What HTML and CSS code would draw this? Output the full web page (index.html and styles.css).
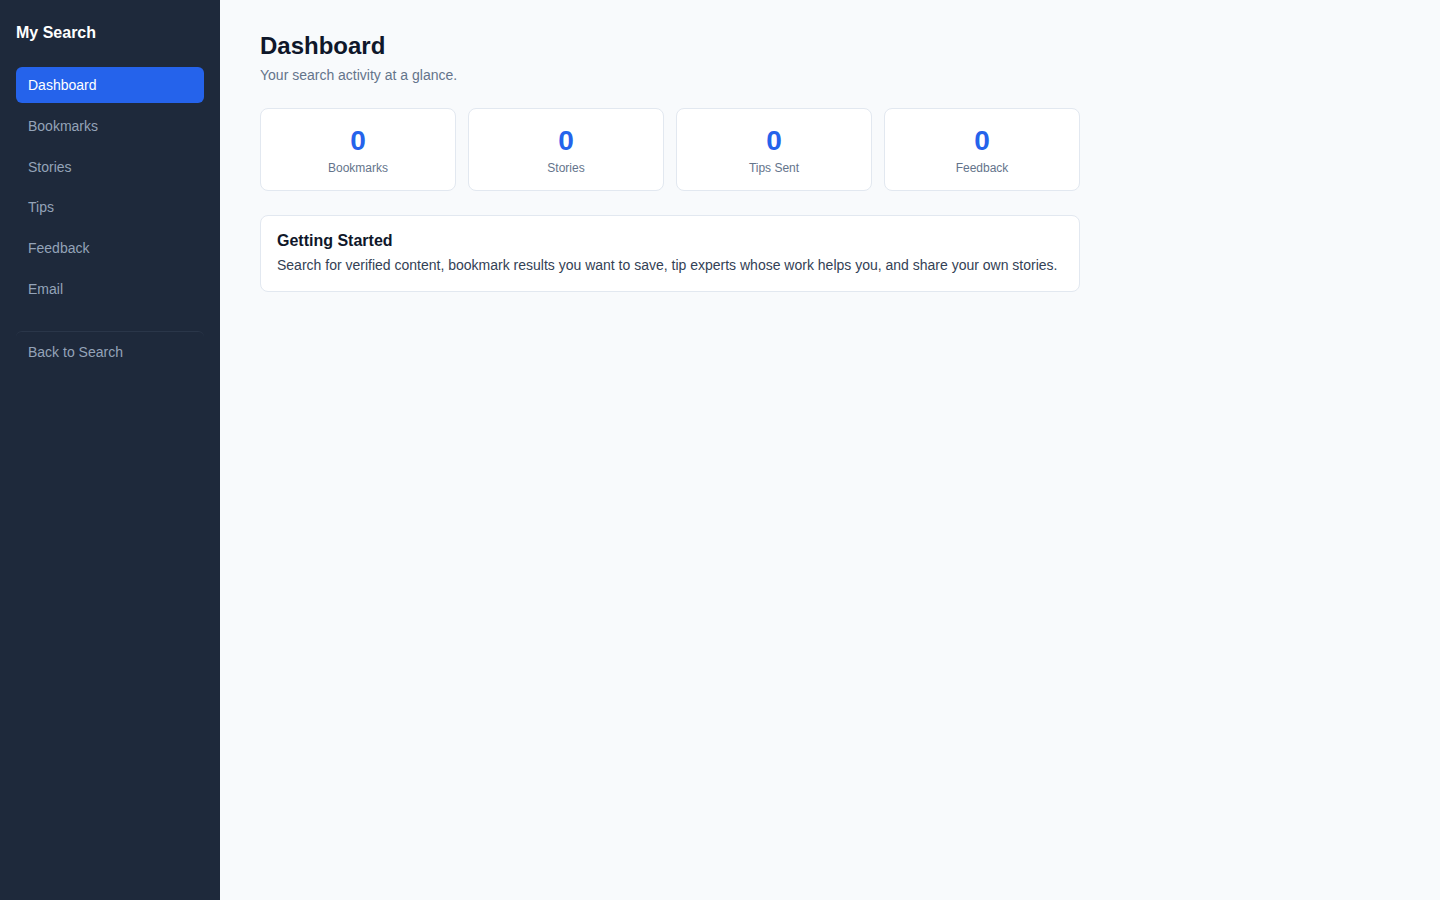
FILE: index.html
```html
<!DOCTYPE html>
<html>
<head>
<meta charset="utf-8">
<link rel="stylesheet" href="styles.css">
</head>
<body>
<div class="app">
  <aside class="sidebar">
    <div class="brand">My Search</div>
    <nav class="nav">
      <a class="nav-item active">Dashboard</a>
      <a class="nav-item">Bookmarks</a>
      <a class="nav-item">Stories</a>
      <a class="nav-item">Tips</a>
      <a class="nav-item">Feedback</a>
      <a class="nav-item">Email</a>
    </nav>
    <div class="nav-footer">
      <a class="nav-item">Back to Search</a>
    </div>
  </aside>
  <main class="main">
    <div class="content">
      <h1 class="title">Dashboard</h1>
      <p class="subtitle">Your search activity at a glance.</p>
      <div class="stats">
        <div class="stat"><div class="stat-num">0</div><div class="stat-label">Bookmarks</div></div>
        <div class="stat"><div class="stat-num">0</div><div class="stat-label">Stories</div></div>
        <div class="stat"><div class="stat-num">0</div><div class="stat-label">Tips Sent</div></div>
        <div class="stat"><div class="stat-num">0</div><div class="stat-label">Feedback</div></div>
      </div>
      <div class="card">
        <h2 class="card-title">Getting Started</h2>
        <p class="card-text">Search for verified content, bookmark results you want to save, tip experts whose work helps you, and share your own stories.</p>
      </div>
    </div>
  </main>
</div>
</body>
</html>
```
FILE: styles.css
```css
* { box-sizing: border-box; }
html, body { margin: 0; padding: 0; height: 100%; }
body {
  font-family: "Liberation Sans", Arial, sans-serif;
  background: #f8fafc;
  color: #0f172a;
}
.app { display: flex; min-height: 100vh; }
.sidebar {
  width: 220px;
  flex-shrink: 0;
  background: #1e293b;
  padding: 21px 16px;
}
.brand {
  color: #ffffff;
  font-size: 16px;
  font-weight: 700;
  line-height: 24px;
  margin-bottom: 22px;
}
.nav { display: flex; flex-direction: column; gap: 4.8px; }
.nav-item {
  display: block;
  padding: 9px 12px;
  line-height: 18px;
  font-size: 14px;
  color: #94a3b8;
  border-radius: 6px;
  text-decoration: none;
}
.nav-item.active { background: #2563eb; color: #ffffff; }
.nav-footer {
  margin-top: 24px;
  border-top: 1px solid #2a3649;
  border-radius: 6px;
  padding-top: 2px;
}
.main { flex: 1; padding: 32px 40px; }
.content { width: 820px; }
.title {
  margin: 0;
  font-size: 24px;
  line-height: 28px;
  font-weight: 700;
  color: #0f172a;
}
.subtitle {
  margin: 7px 0 0;
  font-size: 14px;
  line-height: 17px;
  color: #64748b;
}
.stats {
  display: grid;
  grid-template-columns: repeat(4, 1fr);
  gap: 12px;
  margin-top: 24px;
}
.stat {
  background: #ffffff;
  border: 1px solid #e2e8f0;
  border-radius: 8px;
  padding: 16px 16px 15px;
  text-align: center;
}
.stat-num {
  font-size: 28px;
  line-height: 32px;
  font-weight: 700;
  color: #2563eb;
}
.stat-label {
  margin-top: 4px;
  font-size: 12px;
  line-height: 14px;
  color: #64748b;
}
.card {
  margin-top: 24px;
  background: #ffffff;
  border: 1px solid #e2e8f0;
  border-radius: 8px;
  padding: 16px;
}
.card-title {
  margin: 0;
  font-size: 16px;
  line-height: 18px;
  font-weight: 700;
  color: #0f172a;
}
.card-text {
  margin: 5px 0 0;
  font-size: 14px;
  line-height: 20px;
  color: #334155;
}
```
